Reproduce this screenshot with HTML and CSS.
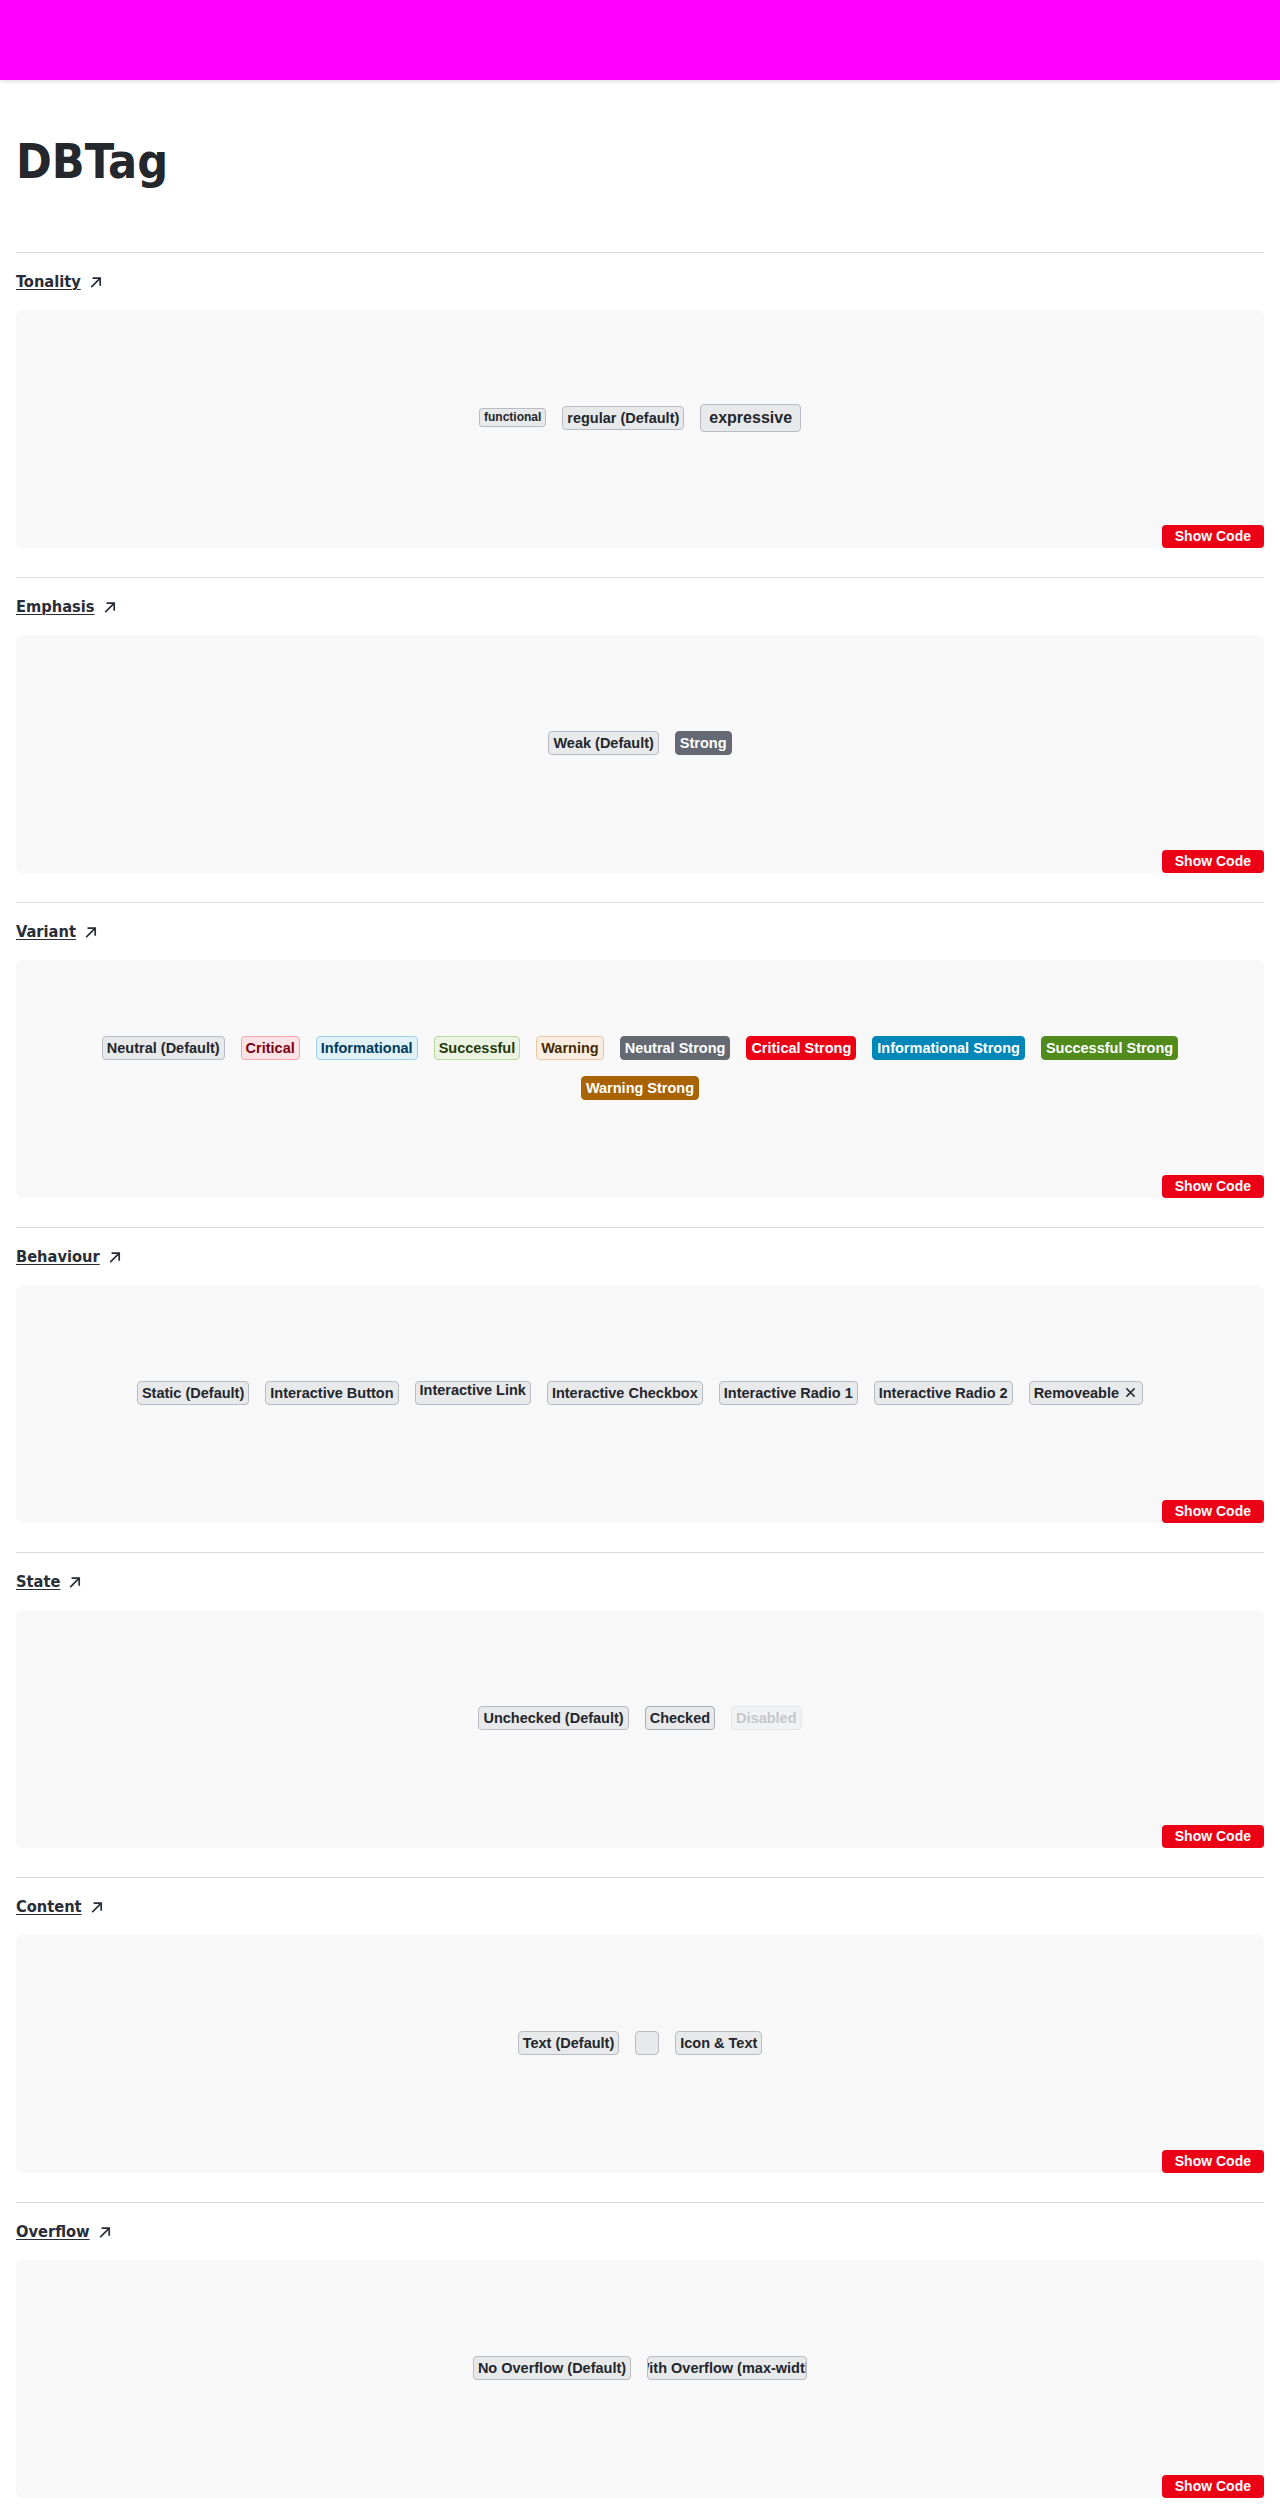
FILE: index.html
```html
<!DOCTYPE html>
<html lang="en">
<head>
<meta charset="utf-8">
<title>DBTag</title>
<link rel="stylesheet" href="styles.css">
</head>
<body>
<header class="topbar"></header>
<main class="page">
  <h1 class="page-title">DBTag</h1>

  <section class="demo">
    <h2 class="demo-title"><a class="demo-link" href="#tonality">Tonality</a><svg class="arrow" viewBox="0 0 12 12" aria-hidden="true"><path d="M1.8 10.6 L10 2.4 M3.4 2.2 H10.2 V9"/></svg></h2>
    <div class="panel">
      <div class="example">
        <div class="tag-row">
          <span class="tag tag-functional">functional</span>
          <span class="tag">regular (Default)</span>
          <span class="tag tag-expressive">expressive</span>
        </div>
      </div>
      <button class="show-code">Show Code</button>
    </div>
  </section>

  <section class="demo">
    <h2 class="demo-title"><a class="demo-link" href="#emphasis">Emphasis</a><svg class="arrow" viewBox="0 0 12 12" aria-hidden="true"><path d="M1.8 10.6 L10 2.4 M3.4 2.2 H10.2 V9"/></svg></h2>
    <div class="panel">
      <div class="example">
        <div class="tag-row">
          <span class="tag">Weak (Default)</span>
          <span class="tag tag-neutral-strong">Strong</span>
        </div>
      </div>
      <button class="show-code">Show Code</button>
    </div>
  </section>

  <section class="demo">
    <h2 class="demo-title"><a class="demo-link" href="#variant">Variant</a><svg class="arrow" viewBox="0 0 12 12" aria-hidden="true"><path d="M1.8 10.6 L10 2.4 M3.4 2.2 H10.2 V9"/></svg></h2>
    <div class="panel">
      <div class="example">
        <div class="tag-row">
          <span class="tag">Neutral (Default)</span>
          <span class="tag tag-critical">Critical</span>
          <span class="tag tag-informational">Informational</span>
          <span class="tag tag-successful">Successful</span>
          <span class="tag tag-warning">Warning</span>
          <span class="tag tag-neutral-strong">Neutral Strong</span>
          <span class="tag tag-critical-strong">Critical Strong</span>
          <span class="tag tag-informational-strong">Informational Strong</span>
          <span class="tag tag-successful-strong">Successful Strong</span>
        </div>
        <div class="tag-row">
          <span class="tag tag-warning-strong">Warning Strong</span>
        </div>
      </div>
      <button class="show-code">Show Code</button>
    </div>
  </section>

  <section class="demo">
    <h2 class="demo-title"><a class="demo-link" href="#behaviour">Behaviour</a><svg class="arrow" viewBox="0 0 12 12" aria-hidden="true"><path d="M1.8 10.6 L10 2.4 M3.4 2.2 H10.2 V9"/></svg></h2>
    <div class="panel">
      <div class="example">
        <div class="tag-row">
          <span class="tag">Static (Default)</span>
          <span class="tag">Interactive Button</span>
          <span class="tag tag-link">Interactive Link</span>
          <span class="tag">Interactive Checkbox</span>
          <span class="tag">Interactive Radio 1</span>
          <span class="tag">Interactive Radio 2</span>
          <span class="tag tag-removeable">Removeable<svg class="close" viewBox="0 0 12 12" aria-hidden="true"><path d="M1.5 1.5 L10.5 10.5 M10.5 1.5 L1.5 10.5"/></svg></span>
        </div>
      </div>
      <button class="show-code">Show Code</button>
    </div>
  </section>

  <section class="demo">
    <h2 class="demo-title"><a class="demo-link" href="#state">State</a><svg class="arrow" viewBox="0 0 12 12" aria-hidden="true"><path d="M1.8 10.6 L10 2.4 M3.4 2.2 H10.2 V9"/></svg></h2>
    <div class="panel">
      <div class="example">
        <div class="tag-row">
          <span class="tag">Unchecked (Default)</span>
          <span class="tag tag-checked">Checked</span>
          <span class="tag tag-disabled">Disabled</span>
        </div>
      </div>
      <button class="show-code">Show Code</button>
    </div>
  </section>

  <section class="demo">
    <h2 class="demo-title"><a class="demo-link" href="#content">Content</a><svg class="arrow" viewBox="0 0 12 12" aria-hidden="true"><path d="M1.8 10.6 L10 2.4 M3.4 2.2 H10.2 V9"/></svg></h2>
    <div class="panel">
      <div class="example">
        <div class="tag-row">
          <span class="tag">Text (Default)</span>
          <span class="tag tag-icon-only"></span>
          <span class="tag">Icon &amp; Text</span>
        </div>
      </div>
      <button class="show-code">Show Code</button>
    </div>
  </section>

  <section class="demo">
    <h2 class="demo-title"><a class="demo-link" href="#overflow">Overflow</a><svg class="arrow" viewBox="0 0 12 12" aria-hidden="true"><path d="M1.8 10.6 L10 2.4 M3.4 2.2 H10.2 V9"/></svg></h2>
    <div class="panel">
      <div class="example">
        <div class="tag-row">
          <span class="tag">No Overflow (Default)</span>
          <span class="tag tag-overflow">With Overflow (max-width)</span>
        </div>
      </div>
      <button class="show-code">Show Code</button>
    </div>
  </section>
</main>
</body>
</html>
```

FILE: styles.css
```css
* {
  box-sizing: border-box;
}

body {
  margin: 0;
  background: #ffffff;
  color: #282d37;
  font-family: "Liberation Sans", Arial, sans-serif;
}

.topbar {
  height: 80px;
  background: #ff00ff;
  box-shadow: 0 2px 4px rgba(0, 0, 0, 0.12);
}

.page {
  padding: 53px 16px 17px 16px;
}

.page-title {
  margin: 0 0 63px 0;
  font-family: "Liberation Sans Narrow", "DejaVu Sans Condensed", sans-serif;
  font-weight: 700;
  font-size: 48px;
  line-height: 56px;
  color: #24272c;
}

.demo {
  border-top: 1px solid #d9dadc;
  padding-top: 17px;
  margin-bottom: 29px;
}

.demo:last-child {
  margin-bottom: 0;
}

.demo-title {
  margin: 0 0 16px 0;
  display: flex;
  align-items: center;
  gap: 9px;
  height: 24px;
  font-family: "Liberation Sans Narrow", "DejaVu Sans Condensed", sans-serif;
  font-weight: 700;
  font-size: 16.3px;
  line-height: 24px;
}

.demo-link {
  color: #282d37;
  text-decoration: underline;
  text-decoration-thickness: 1px;
  text-underline-offset: 2px;
}

.arrow {
  width: 12px;
  height: 12px;
  fill: none;
  stroke: #282d37;
  stroke-width: 1.7;
  stroke-linecap: square;
}

.panel {
  height: 238px;
  display: flex;
  flex-direction: column;
  background: #f8f8f8;
  border-radius: 6px;
}

.example {
  flex: 1;
  display: flex;
  flex-direction: column;
  align-items: center;
  justify-content: center;
  gap: 16px;
  padding: 0 32px;
}

.tag-row {
  display: flex;
  align-items: center;
  justify-content: center;
  gap: 16px;
}

.show-code {
  align-self: flex-end;
  height: 23px;
  padding: 0 13px;
  border: none;
  border-radius: 4px;
  background: #ec0016;
  color: #ffffff;
  font-family: "Liberation Sans", Arial, sans-serif;
  font-weight: 700;
  font-size: 14px;
  line-height: 23px;
}

.tag {
  display: inline-flex;
  align-items: center;
  justify-content: center;
  height: 24px;
  padding: 0 4px;
  border: 1px solid #b9bcc2;
  border-radius: 4px;
  background: #e8e9eb;
  color: #23262c;
  font-weight: 700;
  font-size: 14.5px;
  line-height: 22px;
  white-space: nowrap;
}

.tag-functional {
  height: 19px;
  padding: 0 4px;
  font-size: 12px;
  line-height: 17px;
  border-radius: 3px;
}

.tag-expressive {
  height: 28px;
  padding: 0 8px;
  font-size: 16px;
  line-height: 26px;
}

.tag-neutral-strong {
  background: #646973;
  border-color: #646973;
  color: #ffffff;
}

.tag-critical {
  background: #fde3e6;
  border-color: #f5a3ab;
  color: #7a0010;
}

.tag-informational {
  background: #e1f1f8;
  border-color: #9ed0e6;
  color: #003a5a;
}

.tag-successful {
  background: #ebf4e3;
  border-color: #b8d8a0;
  color: #1f3a08;
}

.tag-warning {
  background: #f8ede0;
  border-color: #e6c7a0;
  color: #472900;
}

.tag-critical-strong {
  background: #ec0016;
  border-color: #ec0016;
  color: #ffffff;
}

.tag-informational-strong {
  background: #0087b9;
  border-color: #0087b9;
  color: #ffffff;
}

.tag-successful-strong {
  background: #508b1b;
  border-color: #508b1b;
  color: #ffffff;
}

.tag-warning-strong {
  background: #a96300;
  border-color: #a96300;
  color: #ffffff;
}

.tag-link {
  line-height: 17px;
  padding-bottom: 5px;
}

.tag-removeable {
  gap: 6px;
  padding-right: 6px;
}

.close {
  width: 11px;
  height: 11px;
  fill: none;
  stroke: #282d37;
  stroke-width: 1.6;
}

.tag-checked {
  border-color: #a9adb4;
}

.tag-disabled {
  background: #f1f2f3;
  border-color: #e4e5e7;
  color: #c5c7cb;
}

.tag-icon-only {
  width: 24px;
  height: 24px;
  padding: 0;
}

.tag-overflow {
  width: 160px;
  overflow: hidden;
}
```
